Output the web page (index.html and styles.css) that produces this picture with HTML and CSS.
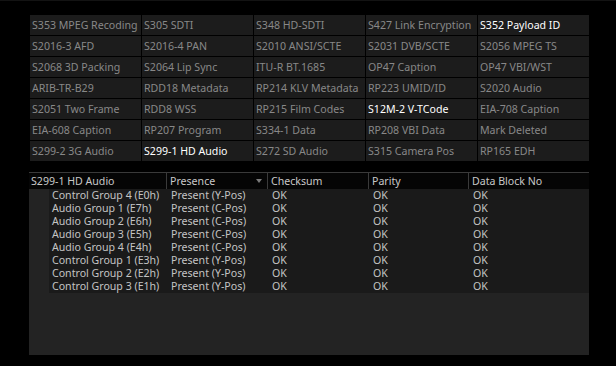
FILE: index.html
```html
<!DOCTYPE html>
<html>
<head>
<meta charset="utf-8">
<link rel="stylesheet" href="styles.css">
</head>
<body>
<div class="screen">
  <div class="grid">
    <div class="cell">S353 MPEG Recoding</div>
    <div class="cell">S305 SDTI</div>
    <div class="cell">S348 HD-SDTI</div>
    <div class="cell">S427 Link Encryption</div>
    <div class="cell on">S352 Payload ID</div>
    <div class="cell">S2016-3 AFD</div>
    <div class="cell">S2016-4 PAN</div>
    <div class="cell">S2010 ANSI/SCTE</div>
    <div class="cell">S2031 DVB/SCTE</div>
    <div class="cell">S2056 MPEG TS</div>
    <div class="cell">S2068 3D Packing</div>
    <div class="cell">S2064 Lip Sync</div>
    <div class="cell">ITU-R BT.1685</div>
    <div class="cell">OP47 Caption</div>
    <div class="cell">OP47 VBI/WST</div>
    <div class="cell">ARIB-TR-B29</div>
    <div class="cell">RDD18 Metadata</div>
    <div class="cell">RP214 KLV Metadata</div>
    <div class="cell">RP223 UMID/ID</div>
    <div class="cell">S2020 Audio</div>
    <div class="cell">S2051 Two Frame</div>
    <div class="cell">RDD8 WSS</div>
    <div class="cell">RP215 Film Codes</div>
    <div class="cell on">S12M-2 V-TCode</div>
    <div class="cell">EIA-708 Caption</div>
    <div class="cell">EIA-608 Caption</div>
    <div class="cell">RP207 Program</div>
    <div class="cell">S334-1 Data</div>
    <div class="cell">RP208 VBI Data</div>
    <div class="cell">Mark Deleted</div>
    <div class="cell">S299-2 3G Audio</div>
    <div class="cell on">S299-1 HD Audio</div>
    <div class="cell">S272 SD Audio</div>
    <div class="cell">S315 Camera Pos</div>
    <div class="cell">RP165 EDH</div>
  </div>

  <div class="panel">
    <div class="thead">
      <div class="th">S299-1 HD Audio</div>
      <div class="th sort"><span>Presence</span><span class="arrow"></span></div>
      <div class="th">Checksum</div>
      <div class="th">Parity</div>
      <div class="th last">Data Block No</div>
    </div>
    <div class="tbody">
      <div class="tr"><span>Control Group 4 (E0h)</span><span>Present (Y-Pos)</span><span>OK</span><span>OK</span><span>OK</span></div>
      <div class="tr"><span>Audio Group 1 (E7h)</span><span>Present (C-Pos)</span><span>OK</span><span>OK</span><span>OK</span></div>
      <div class="tr"><span>Audio Group 2 (E6h)</span><span>Present (C-Pos)</span><span>OK</span><span>OK</span><span>OK</span></div>
      <div class="tr"><span>Audio Group 3 (E5h)</span><span>Present (C-Pos)</span><span>OK</span><span>OK</span><span>OK</span></div>
      <div class="tr"><span>Audio Group 4 (E4h)</span><span>Present (C-Pos)</span><span>OK</span><span>OK</span><span>OK</span></div>
      <div class="tr"><span>Control Group 1 (E3h)</span><span>Present (Y-Pos)</span><span>OK</span><span>OK</span><span>OK</span></div>
      <div class="tr"><span>Control Group 2 (E2h)</span><span>Present (Y-Pos)</span><span>OK</span><span>OK</span><span>OK</span></div>
      <div class="tr"><span>Control Group 3 (E1h)</span><span>Present (Y-Pos)</span><span>OK</span><span>OK</span><span>OK</span></div>
    </div>
  </div>
</div>
</body>
</html>
```

FILE: styles.css
```css
html, body {
  margin: 0;
  padding: 0;
  background: #000;
}
body {
  width: 616px;
  height: 366px;
  overflow: hidden;
  font-family: "Noto Sans", "Open Sans", sans-serif;
}
.screen {
  border-top: 1px solid #131313;
  padding: 14px 0 0 0;
}
.grid {
  margin-left: 30px;
  width: 559px;
  display: grid;
  grid-template-columns: repeat(5, 111px);
  grid-auto-rows: 20px;
  gap: 1px;
}
.cell {
  background: #1c1c1c;
  color: #888;
  font-size: 10.6px;
  line-height: 20px;
  padding-left: 2px;
  white-space: nowrap;
  overflow: hidden;
}
.cell.on {
  color: #fff;
}
.panel {
  margin: 11px 0 0 29px;
  width: 560px;
  height: 183px;
  background: #232323;
  box-sizing: border-box;
}
.thead {
  display: grid;
  grid-template-columns: 138px 101px 101px 100px 120px;
  height: 17px;
  background: #050505;
  border-top: 1px solid #3a3a3a;
  box-sizing: border-box;
}
.th {
  color: #c8c8c8;
  font-size: 10.6px;
  line-height: 16px;
  padding-left: 2px;
  border-right: 1px solid #3a3a3a;
  white-space: nowrap;
}
.th.last {
  border-right: none;
}
.th + .th {
  padding-left: 3px;
}
.th.sort {
  display: flex;
  justify-content: space-between;
  align-items: center;
  padding-right: 5px;
}
.arrow {
  width: 0;
  height: 0;
  border-left: 3.5px solid transparent;
  border-right: 3.5px solid transparent;
  border-top: 4px solid #7a7a7a;
}
.tbody {
  margin-left: 20px;
  background: #1a1a1a;
}
.tr {
  display: grid;
  grid-template-columns: 118px 101px 101px 100px 120px;
  height: 13px;
  color: #c4c4c4;
  font-size: 10.6px;
  line-height: 13px;
  white-space: nowrap;
}
.tr span {
  padding-left: 4px;
  overflow: hidden;
  height: 13px;
}
.tr span:first-child {
  padding-left: 3px;
}
```
